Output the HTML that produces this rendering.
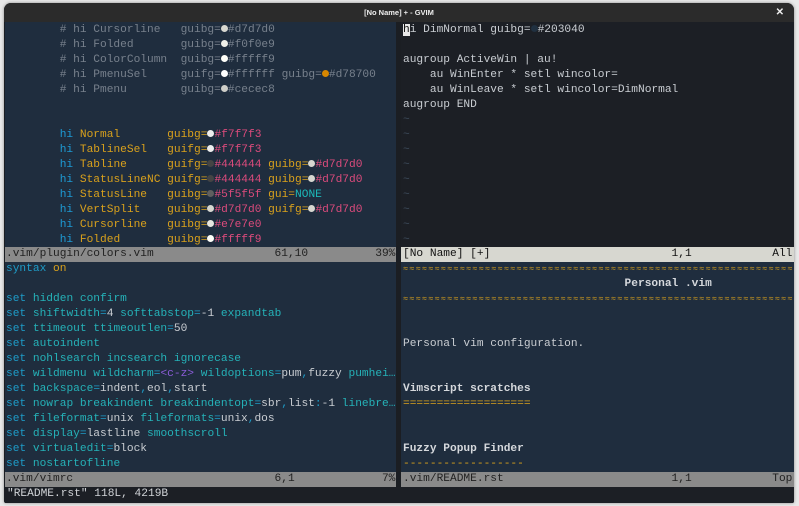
<!DOCTYPE html>
<html><head><meta charset="utf-8"><style>
*{margin:0;padding:0;box-sizing:border-box}
body{width:799px;height:506px;background:#e9e9e9;overflow:hidden;position:relative;font-family:"Liberation Mono",monospace;font-size:11.2px}
.win{position:absolute;left:4px;top:3px;width:790px;height:500px;background:#1b1e23;border-radius:7px 7px 2px 2px;overflow:hidden;box-shadow:0 0 3px rgba(0,0,0,.4)}
.title{position:absolute;left:0;top:0;width:790px;height:19px;background:#2b2b2b;color:#eee;font-family:"Liberation Sans",sans-serif;font-size:7.5px;font-weight:bold;text-align:center;line-height:19px}
.x{position:absolute;right:10px;top:0;font-size:10px}
.p{position:absolute;line-height:15px;overflow:hidden}
.d{background:#1f2d3e}
.a{background:#1c1f25}
.r{height:15px;padding-left:1px;color:#c9cdd2;white-space:pre;overflow:hidden}
.st{position:absolute;height:15px;line-height:15px;white-space:pre;overflow:hidden;color:#222;background:#8a8a8a;padding-left:1px}
.c{color:#77808c}.b{color:#1d9ad4}.o{color:#d9a11c}.k{color:#dc4b7c}.n{color:#1cb8b8}
.s{color:#1e9cc8}.t{color:#25b2b8}.pu{color:#8b5cd8}
.dot{display:inline-block;width:7px;height:7px;border-radius:50%;background:#eee;vertical-align:0px}
.ti{color:#3c4a5a}
.bo{font-weight:bold;color:#d5d8dc}
.w{font-size:8.5px;letter-spacing:1.2px}
</style></head><body>
<div class="win">
<div class="title">[No Name] + - GVIM<span class="x">✕</span></div>
<div class="p d" style="left:1px;top:19px;width:391px;height:225px;padding-top:1px">
<div class="r">        <span class="c"># hi Cursorline   guibg=<span class="dot" style="background:#d7d7d0"></span>#d7d7d0</span></div>
<div class="r">        <span class="c"># hi Folded       guibg=<span class="dot" style="background:#f0f0e9"></span>#f0f0e9</span></div>
<div class="r">        <span class="c"># hi ColorColumn  guibg=<span class="dot" style="background:#fffff9"></span>#fffff9</span></div>
<div class="r">        <span class="c"># hi PmenuSel     guifg=<span class="dot" style="background:#fff"></span>#ffffff guibg=<span class="dot" style="background:#d78700"></span>#d78700</span></div>
<div class="r">        <span class="c"># hi Pmenu        guibg=<span class="dot" style="background:#cecec8"></span>#cecec8</span></div>
<div class="r"> </div><div class="r"> </div>
<div class="r">        <span class="b">hi</span> <span class="o">Normal       guibg=</span><span class="dot"></span><span class="k">#f7f7f3</span></div>
<div class="r">        <span class="b">hi</span> <span class="o">TablineSel   guifg=</span><span class="dot"></span><span class="k">#f7f7f3</span></div>
<div class="r">        <span class="b">hi</span> <span class="o">Tabline      guifg=</span><span class="dot" style="background:#444"></span><span class="k">#444444</span> <span class="o">guibg=</span><span class="dot" style="background:#d7d7d0"></span><span class="k">#d7d7d0</span></div>
<div class="r">        <span class="b">hi</span> <span class="o">StatusLineNC guifg=</span><span class="dot" style="background:#444"></span><span class="k">#444444</span> <span class="o">guibg=</span><span class="dot" style="background:#d7d7d0"></span><span class="k">#d7d7d0</span></div>
<div class="r">        <span class="b">hi</span> <span class="o">StatusLine   guibg=</span><span class="dot" style="background:#5f5f5f"></span><span class="k">#5f5f5f</span> <span class="o">gui=</span><span class="n">NONE</span></div>
<div class="r">        <span class="b">hi</span> <span class="o">VertSplit    guibg=</span><span class="dot" style="background:#d7d7d0"></span><span class="k">#d7d7d0</span> <span class="o">guifg=</span><span class="dot" style="background:#d7d7d0"></span><span class="k">#d7d7d0</span></div>
<div class="r">        <span class="b">hi</span> <span class="o">Cursorline   guibg=</span><span class="dot" style="background:#e7e7e0"></span><span class="k">#e7e7e0</span></div>
<div class="r">        <span class="b">hi</span> <span class="o">Folded       guibg=</span><span class="dot" style="background:#fffff9"></span><span class="k">#fffff9</span></div>
</div>
<div class="st" style="left:1px;top:244px;width:391px">.vim/plugin/colors.vim                  61,10          39%</div>
<div class="p d" style="left:1px;top:259px;width:391px;height:210px">
<div class="r"><span class="s">syntax</span> <span class="o">on</span></div>
<div class="r"> </div>
<div class="r"><span class="s">set</span> <span class="t">hidden confirm</span></div>
<div class="r"><span class="s">set</span> <span class="t">shiftwidth</span><span class="s">=</span>4 <span class="t">softtabstop</span><span class="s">=</span>-1 <span class="t">expandtab</span></div>
<div class="r"><span class="s">set</span> <span class="t">ttimeout ttimeoutlen</span><span class="s">=</span>50</div>
<div class="r"><span class="s">set</span> <span class="t">autoindent</span></div>
<div class="r"><span class="s">set</span> <span class="t">nohlsearch incsearch ignorecase</span></div>
<div class="r"><span class="s">set</span> <span class="t">wildmenu wildcharm</span><span class="s">=</span><span class="pu">&lt;c-z&gt;</span> <span class="t">wildoptions</span><span class="s">=</span>pum<span class="s">,</span>fuzzy <span class="t">pumhei…</span></div>
<div class="r"><span class="s">set</span> <span class="t">backspace</span><span class="s">=</span>indent<span class="s">,</span>eol<span class="s">,</span>start</div>
<div class="r"><span class="s">set</span> <span class="t">nowrap breakindent breakindentopt</span><span class="s">=</span>sbr<span class="s">,</span>list<span class="s">:</span>-1 <span class="t">linebre…</span></div>
<div class="r"><span class="s">set</span> <span class="t">fileformat</span><span class="s">=</span>unix <span class="t">fileformats</span><span class="s">=</span>unix<span class="s">,</span>dos</div>
<div class="r"><span class="s">set</span> <span class="t">display</span><span class="s">=</span>lastline <span class="t">smoothscroll</span></div>
<div class="r"><span class="s">set</span> <span class="t">virtualedit</span><span class="s">=</span>block</div>
<div class="r"><span class="s">set</span> <span class="t">nostartofline</span></div>
</div>
<div class="st" style="left:1px;top:469px;width:391px">.vim/vimrc                              6,1             7%</div>
<div class="p a" style="left:397px;top:19px;width:393px;height:225px;padding-top:1px">
<div class="r" style="padding-left:2px"><span style="background:#e8e8e8;color:#111">h</span>i DimNormal guibg=<span class="dot" style="background:#203040"></span>#203040</div>
<div class="r"> </div>
<div class="r" style="padding-left:2px">augroup ActiveWin | au!</div>
<div class="r" style="padding-left:2px">    au WinEnter * setl wincolor=</div>
<div class="r" style="padding-left:2px">    au WinLeave * setl wincolor=DimNormal</div>
<div class="r" style="padding-left:2px">augroup END</div>
<div class="r ti" style="padding-left:2px">~</div><div class="r ti" style="padding-left:2px">~</div><div class="r ti" style="padding-left:2px">~</div><div class="r ti" style="padding-left:2px">~</div><div class="r ti" style="padding-left:2px">~</div><div class="r ti" style="padding-left:2px">~</div><div class="r ti" style="padding-left:2px">~</div><div class="r ti" style="padding-left:2px">~</div><div class="r ti" style="padding-left:2px">~</div>
</div>
<div class="st" style="left:397px;top:244px;width:393px;background:#d7d7d0;color:#111;padding-left:2px">[No Name] [+]                           1,1            All</div>
<div class="p d" style="left:397px;top:259px;width:393px;height:210px">
<div class="r o w" style="padding-left:2px">≈≈≈≈≈≈≈≈≈≈≈≈≈≈≈≈≈≈≈≈≈≈≈≈≈≈≈≈≈≈≈≈≈≈≈≈≈≈≈≈≈≈≈≈≈≈≈≈≈≈≈≈≈≈≈≈≈≈≈≈≈≈≈≈≈≈</div>
<div class="r bo" style="padding-left:2px">                                 Personal .vim</div>
<div class="r o w" style="padding-left:2px">≈≈≈≈≈≈≈≈≈≈≈≈≈≈≈≈≈≈≈≈≈≈≈≈≈≈≈≈≈≈≈≈≈≈≈≈≈≈≈≈≈≈≈≈≈≈≈≈≈≈≈≈≈≈≈≈≈≈≈≈≈≈≈≈≈≈</div>
<div class="r"> </div><div class="r"> </div>
<div class="r" style="padding-left:2px">Personal vim configuration.</div>
<div class="r"> </div><div class="r"> </div>
<div class="r bo" style="padding-left:2px">Vimscript scratches</div>
<div class="r o" style="padding-left:2px">===================</div>
<div class="r"> </div><div class="r"> </div>
<div class="r bo" style="padding-left:2px">Fuzzy Popup Finder</div>
<div class="r o" style="padding-left:2px">------------------</div>
</div>
<div class="st" style="left:397px;top:469px;width:393px;padding-left:2px">.vim/README.rst                         1,1            Top</div>
<div class="r" style="position:absolute;left:1px;top:484px;width:789px;height:16px;line-height:15px;padding-left:2px;color:#d0d3d7;background:#1c1f25">"README.rst" 118L, 4219B</div>
</div>
</body></html>
